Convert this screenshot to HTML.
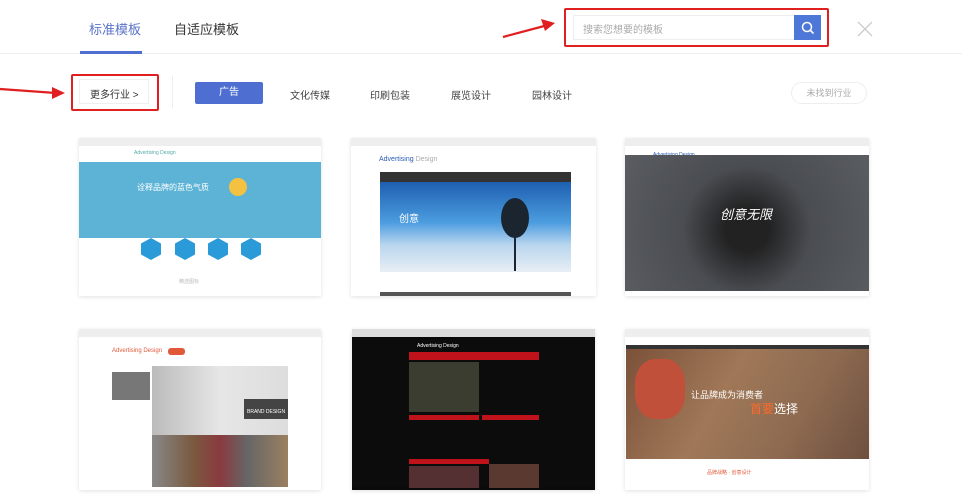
<!DOCTYPE html>
<html><head><meta charset="utf-8"><style>
*{margin:0;padding:0;box-sizing:border-box}
body{width:962px;height:500px;background:#fff;font-family:"Liberation Sans","Noto Sans CJK SC",sans-serif;position:relative;overflow:hidden}
.a{position:absolute}
.t{font-size:13px;color:#333}
.card{position:absolute;background:#fff;box-shadow:0 1px 4px rgba(0,0,0,.12)}
.bar{position:absolute;left:0;top:0;right:0;height:8px;background:#eee}
.sm{position:absolute;font-size:5px;color:#999;white-space:nowrap}
.hx{position:absolute;width:20px;height:22px;background:#2a9ad8;clip-path:polygon(50% 0,100% 25%,100% 75%,50% 100%,0 75%,0 25%)}
</style></head><body>
<div class="a" style="left:0;top:53px;width:962px;height:1px;background:#eee"></div>
<div class="a t" style="left:89px;top:19px;font-size:13px;color:#5a73c9">标准模板</div>
<div class="a" style="left:80px;top:51px;width:62px;height:3px;background:#4e6fd1"></div>
<div class="a t" style="left:174px;top:19px;font-size:13px">自适应模板</div>
<div class="a" style="left:564px;top:8px;width:265px;height:39px;border:2px solid #e02020;border-radius:2px"></div>
<div class="a" style="left:573px;top:15px;width:222px;height:25px;border:1px solid #eee"></div>
<div class="a" style="left:583px;top:21px;font-size:10px;color:#aaa">搜索您想要的模板</div>
<div class="a" style="left:794px;top:15px;width:27px;height:25px;background:#4e78d8"></div>
<svg class="a" style="left:800px;top:20px" width="16" height="16" viewBox="0 0 16 16"><circle cx="7" cy="7" r="4.5" fill="none" stroke="#fff" stroke-width="1.5"/><path d="M10.3 10.3L13.5 13.5" stroke="#fff" stroke-width="1.6"/></svg>
<svg class="a" style="left:857px;top:21px" width="16" height="16"><path d="M1 1L15 15M15 1L1 15" stroke="#ccc" stroke-width="1.3"/></svg>
<svg class="a" style="left:0;top:0" width="962" height="120"><path d="M503 37L548 25" stroke="#e02020" stroke-width="2.2"/><path d="M555 23L541 19L545 31Z" fill="#e02020"/><path d="M0 89L56 93" stroke="#e02020" stroke-width="2.2"/><path d="M65 93L52 87L52 99Z" fill="#e02020"/></svg>
<div class="a" style="left:71px;top:74px;width:88px;height:37px;border:2px solid #e02020;border-radius:2px"></div>
<div class="a" style="left:79px;top:79px;width:70px;height:25px;border:1px solid #eee"></div>
<div class="a" style="left:90px;top:86px;font-size:10px;color:#333">更多行业 &gt;</div>
<div class="a" style="left:172px;top:76px;width:1px;height:32px;background:#eee"></div>
<div class="a" style="left:195px;top:82px;width:68px;height:22px;background:#4e6fd1;border-radius:2px;color:#fff;font-size:10px;text-align:center;line-height:22px">广告</div>
<div class="a" style="left:290px;top:87px;font-size:10px;color:#444">文化传媒</div>
<div class="a" style="left:370px;top:87px;font-size:10px;color:#444">印刷包装</div>
<div class="a" style="left:451px;top:87px;font-size:10px;color:#444">展览设计</div>
<div class="a" style="left:532px;top:87px;font-size:10px;color:#444">园林设计</div>
<div class="a" style="left:791px;top:82px;width:76px;height:22px;border:1px solid #eee;border-radius:11px;font-size:9px;color:#aaa;text-align:center;line-height:20px">未找到行业</div>
<div class="card" style="left:79px;top:138px;width:242px;height:158px"><div class="bar"></div>
<div class="sm" style="left:55px;top:12px;color:#5aa">Advertising Design</div>
<div class="a" style="left:0;top:24px;width:242px;height:76px;background:#5cb3d6"></div>
<div class="sm" style="left:58px;top:44px;font-size:8px;color:#fff">诠释品牌的蓝色气质</div>
<div class="a" style="left:150px;top:40px;width:18px;height:18px;border-radius:50%;background:#f4c141"></div>
<div class="hx" style="left:62px;top:100px"></div>
<div class="hx" style="left:96px;top:100px"></div>
<div class="hx" style="left:129px;top:100px"></div>
<div class="hx" style="left:162px;top:100px"></div>
<div class="sm" style="left:100px;top:140px;color:#bbb">精选图标</div>
</div>
<div class="card" style="left:351px;top:138px;width:245px;height:158px"><div class="bar"></div>
<div class="sm" style="left:28px;top:18px;font-size:7px;color:#2a5bb5">Advertising <span style="color:#aaa">Design</span></div>
<div class="a" style="left:29px;top:34px;width:191px;height:10px;background:#333"></div>
<div class="a" style="left:29px;top:44px;width:191px;height:90px;background:linear-gradient(#1e5fb0,#4c9de0 45%,#b9d6ee 70%,#e8eef5)"></div>
<div class="a" style="left:150px;top:60px;width:28px;height:40px;border-radius:50%;background:#1a2530"></div>
<div class="a" style="left:163px;top:95px;width:2px;height:38px;background:#1a2530"></div>
<div class="sm" style="left:48px;top:72px;font-size:10px;color:#fff">创意</div>
<div class="a" style="left:29px;top:154px;width:191px;height:4px;background:#555"></div>
</div>
<div class="card" style="left:625px;top:138px;width:244px;height:158px"><div class="bar"></div>
<div class="sm" style="left:28px;top:14px;color:#2a5bb5">Advertising Design</div>
<div class="a" style="left:0;top:17px;width:244px;height:136px;background:radial-gradient(circle at 50% 55%,#222 15%,#4a4d52 45%,#5a5d62)"></div>
<div class="sm" style="left:95px;top:66px;font-size:13px;color:#fff;font-style:italic">创意无限</div>
</div>
<div class="card" style="left:79px;top:329px;width:242px;height:161px"><div class="bar"></div>
<div class="sm" style="left:33px;top:19px;font-size:6px;color:#e05a3a">Advertising Design</div>
<div class="a" style="left:89px;top:19px;width:17px;height:7px;background:#e05a3a;border-radius:3px"></div>
<div class="a" style="left:73px;top:37px;width:136px;height:93px;background:linear-gradient(90deg,#bbb,#e6e6e6 50%,#ddd)"></div>
<div class="a" style="left:165px;top:70px;width:44px;height:20px;background:#444"></div>
<div class="sm" style="left:168px;top:80px;color:#fff">BRAND DESIGN</div>
<div class="a" style="left:33px;top:43px;width:38px;height:28px;background:#777"></div>
<div class="a" style="left:73px;top:106px;width:136px;height:52px;background:linear-gradient(90deg,#888,#7a5a40 30%,#8a3a40 50%,#666 70%,#9a8060)"></div>
</div>
<div class="card" style="left:352px;top:329px;width:243px;height:161px;background:#0a0a0a"><div class="bar" style="background:#ddd"></div>
<div class="a" style="left:0;top:9px;width:243px;height:149px;background:#0c0c0c"></div>
<div class="a" style="left:57px;top:23px;width:130px;height:8px;background:#c0121a"></div>
<div class="a" style="left:57px;top:33px;width:70px;height:50px;background:#3a3d30"></div>
<div class="a" style="left:57px;top:86px;width:70px;height:5px;background:#c0121a"></div>
<div class="a" style="left:130px;top:86px;width:57px;height:5px;background:#c0121a"></div>
<div class="a" style="left:57px;top:130px;width:80px;height:5px;background:#c0121a"></div>
<div class="a" style="left:57px;top:137px;width:70px;height:22px;background:#553033"></div>
<div class="a" style="left:137px;top:135px;width:50px;height:24px;background:#5a3a30"></div>
<div class="sm" style="left:65px;top:14px;color:#fff">Advertising Design</div>
</div>
<div class="card" style="left:625px;top:329px;width:244px;height:161px"><div class="bar"></div>
<div class="a" style="left:1px;top:16px;width:243px;height:114px;background:linear-gradient(120deg,#7a5038,#a07858 40%,#8d6a50 70%,#6e5040)"></div>
<div class="a" style="left:1px;top:16px;width:243px;height:4px;background:#333"></div>
<div class="a" style="left:10px;top:30px;width:50px;height:60px;border-radius:40%;background:#c0503a"></div>
<div class="sm" style="left:66px;top:59px;font-size:9px;color:#fff">让品牌成为消费者</div>
<div class="sm" style="left:125px;top:71px;font-size:12px;color:#ff6a2a">首要<span style="color:#fff">选择</span></div>
<div class="sm" style="left:82px;top:140px;color:#e05a3a">品牌战略 · 创意设计</div>
</div>
</body></html>
